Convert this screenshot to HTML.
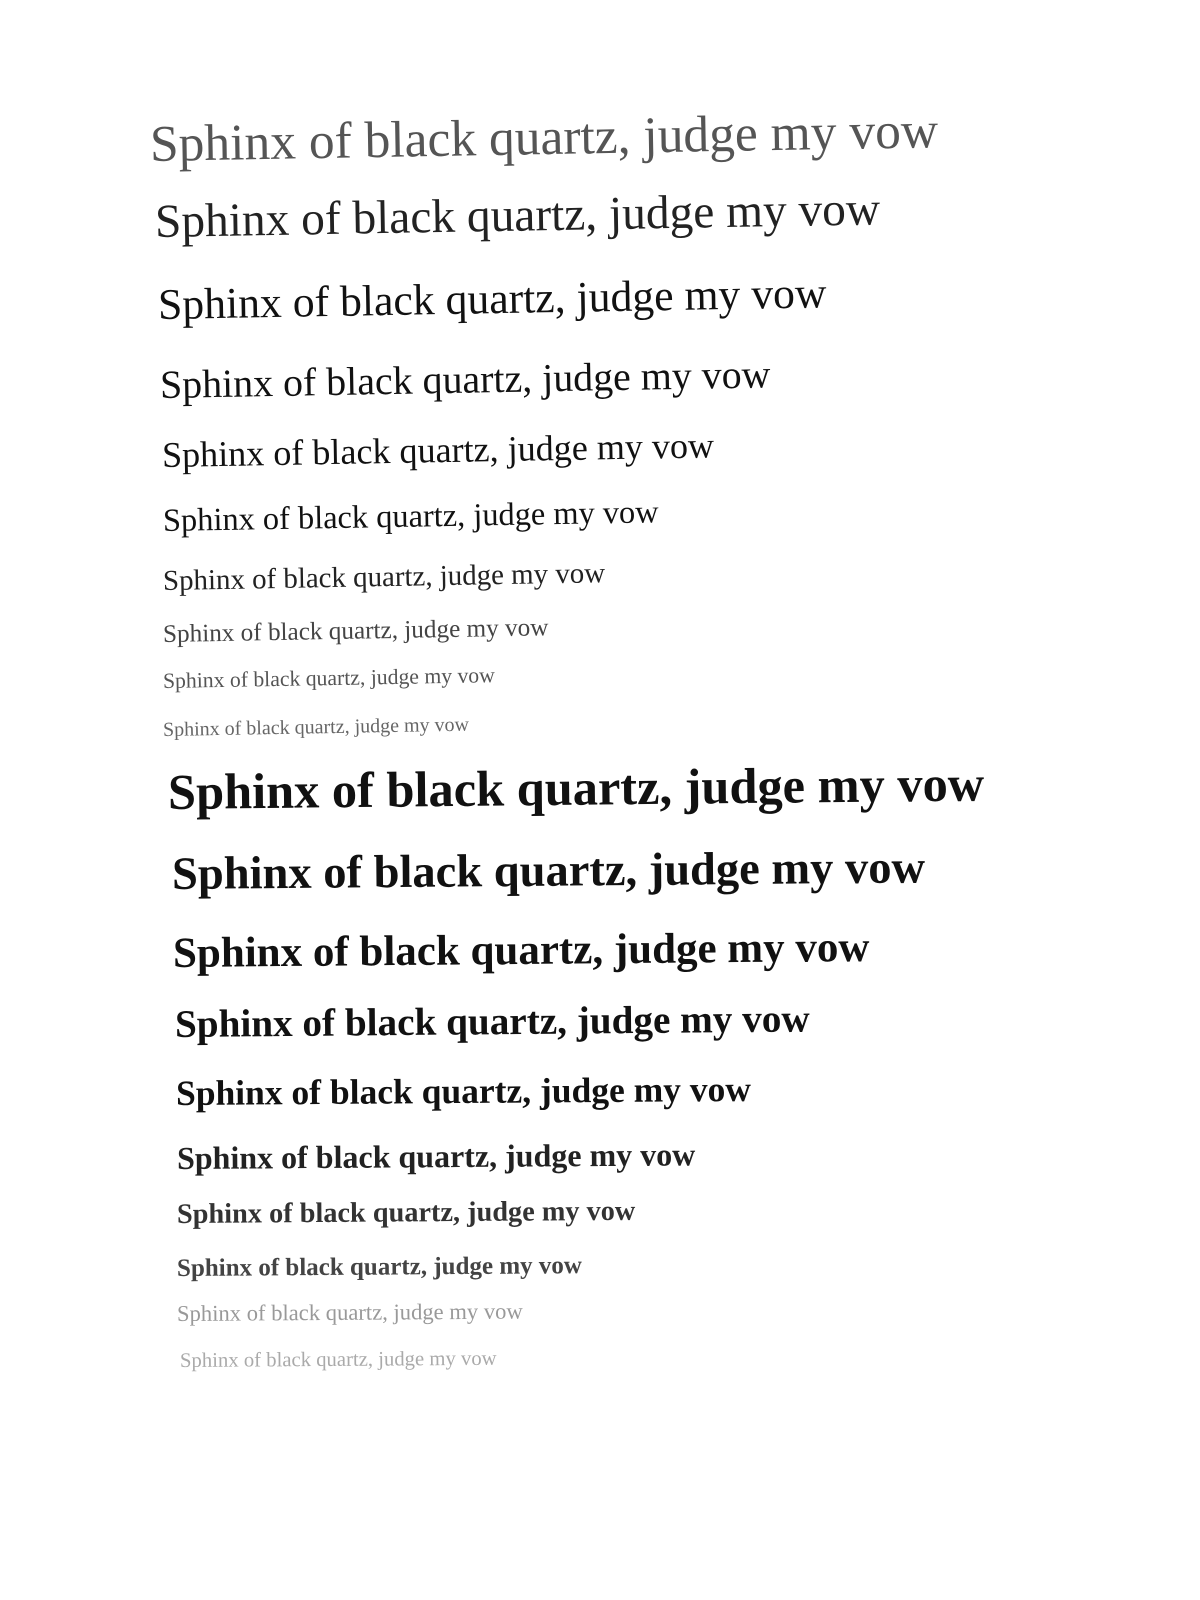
<!DOCTYPE html>
<html><head><meta charset="utf-8"><style>
html,body{margin:0;padding:0;background:#fff;}
body{width:1200px;height:1600px;position:relative;overflow:hidden;font-family:"Liberation Serif",serif;color:#111;}
.l{position:absolute;white-space:nowrap;line-height:1;transform-origin:left center;}
.b{font-weight:bold;}
</style></head><body>
<div class="l" style="left:150px;top:119px;font-size:51.5px;color:#555;transform:rotate(-1deg)">Sphinx of black quartz, judge my vow</div>
<div class="l" style="left:155px;top:199px;font-size:47.4px;color:#222;transform:rotate(-1deg)">Sphinx of black quartz, judge my vow</div>
<div class="l" style="left:158px;top:284px;font-size:43.7px;transform:rotate(-1deg)">Sphinx of black quartz, judge my vow</div>
<div class="l" style="left:160px;top:365px;font-size:39.9px;transform:rotate(-1deg)">Sphinx of black quartz, judge my vow</div>
<div class="l" style="left:162px;top:437px;font-size:36.1px;transform:rotate(-1deg)">Sphinx of black quartz, judge my vow</div>
<div class="l" style="left:163px;top:505px;font-size:32.4px;transform:rotate(-1deg)">Sphinx of black quartz, judge my vow</div>
<div class="l" style="left:163px;top:567px;font-size:28.9px;color:#222;transform:rotate(-1deg)">Sphinx of black quartz, judge my vow</div>
<div class="l" style="left:163px;top:622px;font-size:25.2px;color:#444;transform:rotate(-1deg)">Sphinx of black quartz, judge my vow</div>
<div class="l" style="left:163px;top:671px;font-size:21.7px;color:#555;transform:rotate(-1deg)">Sphinx of black quartz, judge my vow</div>
<div class="l" style="left:163px;top:720px;font-size:20px;color:#666;transform:rotate(-1deg)">Sphinx of black quartz, judge my vow</div>
<div class="l b" style="left:168px;top:767px;font-size:50.4px;transform:rotate(-0.6deg)">Sphinx of black quartz, judge my vow</div>
<div class="l b" style="left:172px;top:852px;font-size:46.5px;transform:rotate(-0.5deg)">Sphinx of black quartz, judge my vow</div>
<div class="l b" style="left:173px;top:932px;font-size:43px;transform:rotate(-0.5deg)">Sphinx of black quartz, judge my vow</div>
<div class="l b" style="left:175px;top:1005px;font-size:39.2px;transform:rotate(-0.5deg)">Sphinx of black quartz, judge my vow</div>
<div class="l b" style="left:176px;top:1076px;font-size:35.5px;transform:rotate(-0.4deg)">Sphinx of black quartz, judge my vow</div>
<div class="l b" style="left:177px;top:1142px;font-size:32px;color:#222;transform:rotate(-0.4deg)">Sphinx of black quartz, judge my vow</div>
<div class="l b" style="left:177px;top:1201px;font-size:28.3px;color:#333;transform:rotate(-0.4deg)">Sphinx of black quartz, judge my vow</div>
<div class="l" style="left:177px;top:1256px;font-size:25px;color:#444;font-weight:bold;transform:rotate(-0.4deg)">Sphinx of black quartz, judge my vow</div>
<div class="l" style="left:177px;top:1303px;font-size:22.6px;color:#999;transform:rotate(-0.4deg)">Sphinx of black quartz, judge my vow</div>
<div class="l" style="left:180px;top:1351px;font-size:20.7px;color:#aaa;transform:rotate(-0.4deg)">Sphinx of black quartz, judge my vow</div>
</body></html>
